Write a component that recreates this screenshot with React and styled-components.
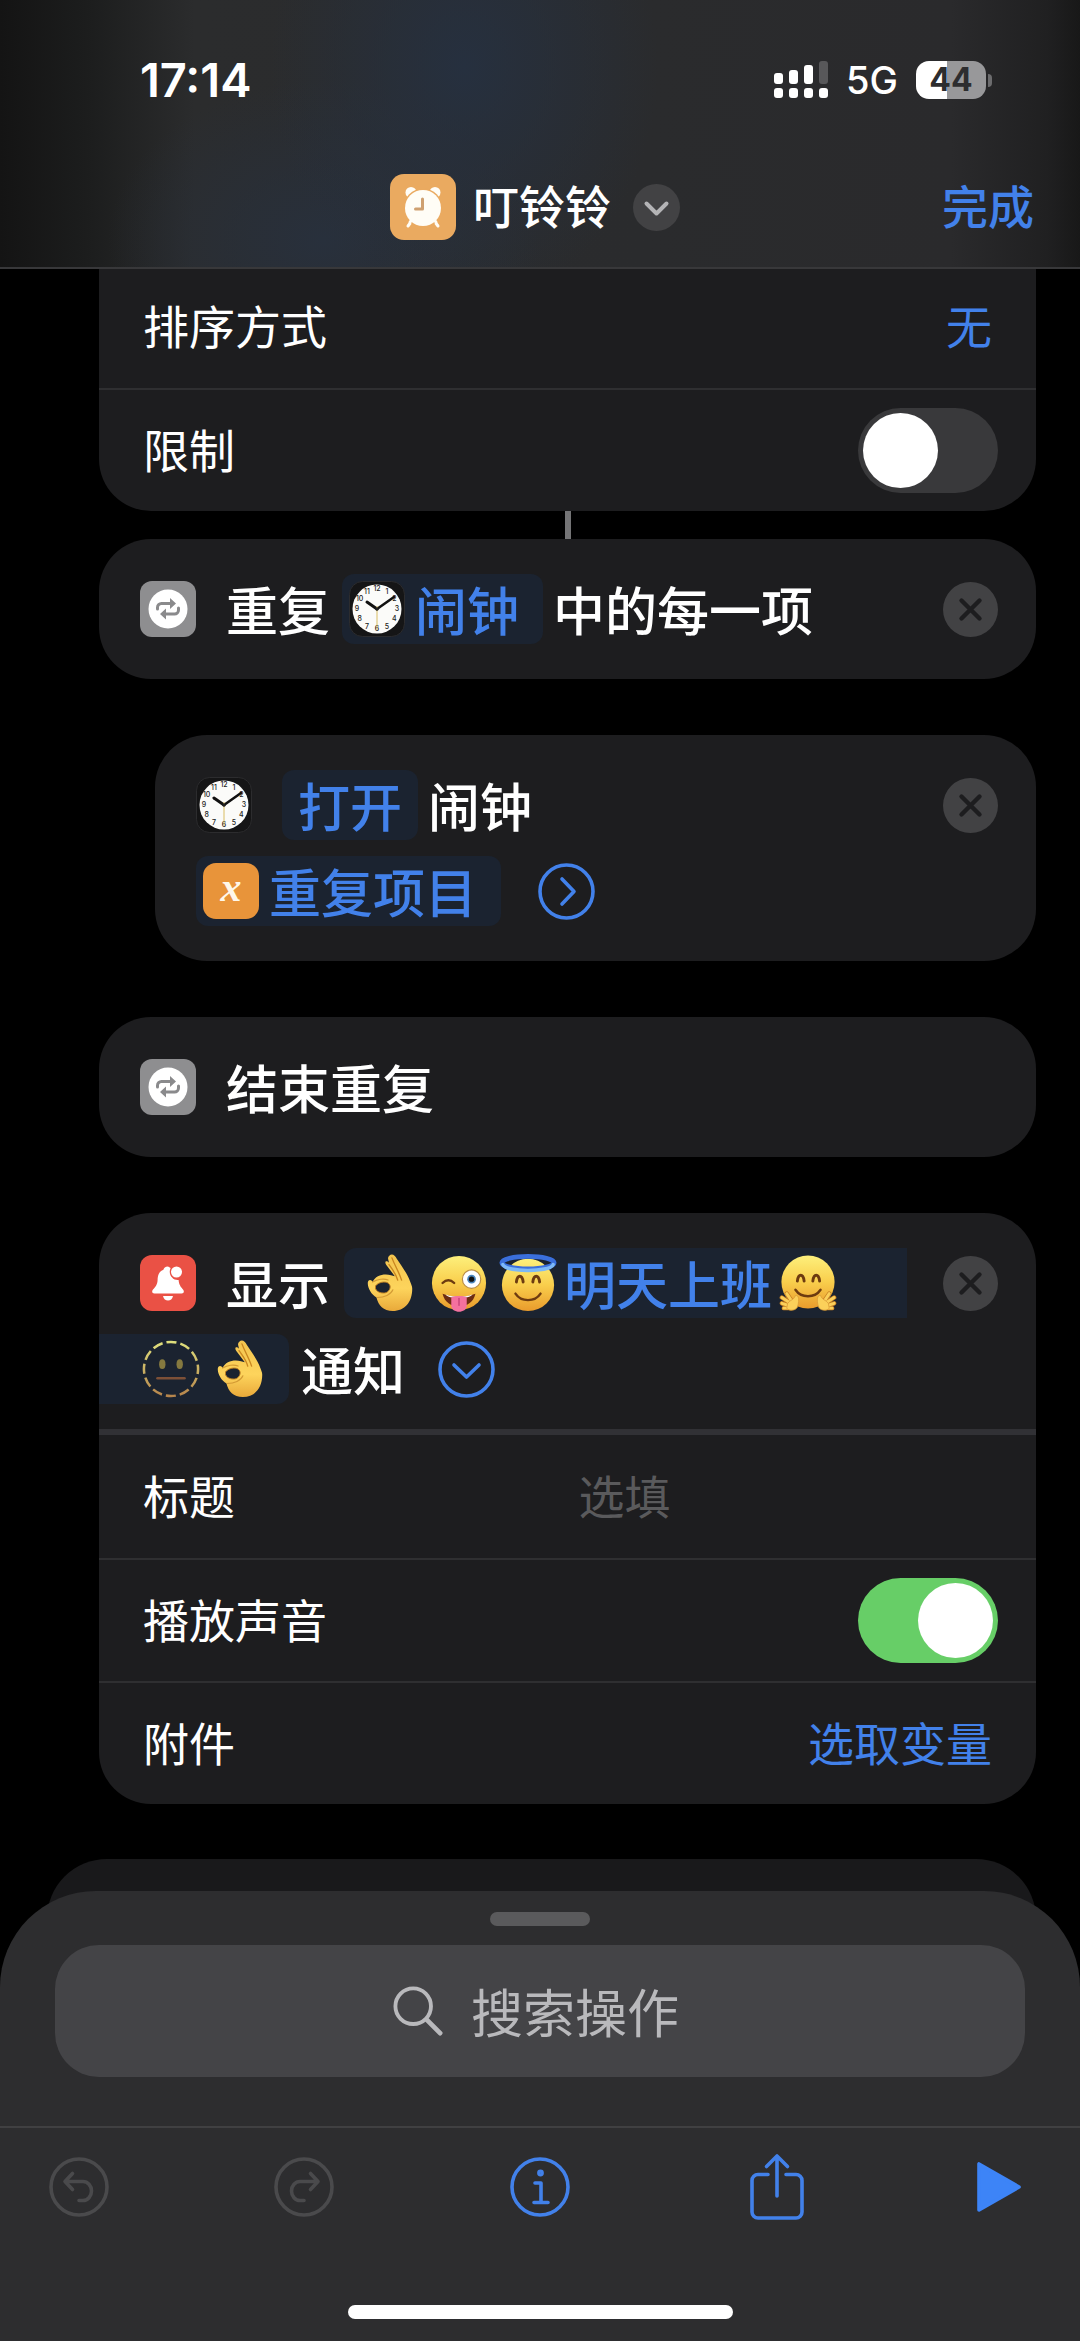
import React from 'react'
import styled, {createGlobalStyle} from 'styled-components'
import {useState} from 'react'

const Colors = {
    BLUE: '#4281ea',
    CARD: '#1d1d1f',
    LINE: '#2f2f31',
    TOKEN: '#1b2330',
    SHEET: '#2d2d2f',
    FIELD: '#444447',
    GREEN: '#67ce67',
    MUTED: '#4a4a4c',
}

const HOURS = [12, 1, 2, 3, 4, 5, 6, 7, 8, 9, 10, 11]

const ClockIcon = () => (
    <Icon viewBox="0 0 56 56" aria-hidden="true">
        <rect x="0.5" y="0.5" width="55" height="55" rx="13" fill="#151516" stroke="#2c2c2e" />
        <circle cx="28" cy="28" r="24.5" fill="#fbfbf9" />
        {HOURS.map((hour, i) => {
            const angle = (i * Math.PI) / 6
            return (
                <text
                    key={hour}
                    x={28 + Math.sin(angle) * 20}
                    y={30.4 - Math.cos(angle) * 20}
                    fontSize="7"
                    fontWeight="500"
                    textAnchor="middle"
                    fill="#222"
                >
                    {hour}
                </text>
            )
        })}
        <path d="M28 28 18 21" stroke="#111" strokeWidth="3" strokeLinecap="round" />
        <path d="M28 28 45 16" stroke="#111" strokeWidth="2.6" strokeLinecap="round" />
        <path d="M28 25v24" stroke="#d9bd62" strokeWidth="1" />
        <circle cx="28" cy="28" r="1.7" fill="#222" />
    </Icon>
)

const RepeatIcon = () => (
    <Icon viewBox="0 0 56 56" aria-hidden="true">
        <rect width="56" height="56" rx="12" fill="#8e8e90" />
        <circle cx="28" cy="28" r="19.5" fill="#fff" />
        <g fill="none" stroke="#8a8a8c" strokeWidth="3" strokeLinecap="round" strokeLinejoin="round">
            <path d="M17.500 28v-1.500a4 4 0 0 1 4-4H32" />
            <path d="M38.500 27v2a4 4 0 0 1-4 4H24" />
        </g>
        <path d="M30 17 36 22.500 30 28ZM26 27.500 20 33 26 38.500Z" fill="#8a8a8c" />
    </Icon>
)

const BellIcon = () => (
    <Icon viewBox="0 0 56 56" aria-hidden="true">
        <rect width="56" height="56" rx="12" fill="#ea5145" />
        <path
            d="M28 11.500c-3 0-4 1.600-4.600 3.200-4.400 1.600-5.600 5.600-5.800 10.200-.200 5-2.400 7-4.600 9.600-1.600 2-.8 4 1.400 4h27.200c2.200 0 3-2 1.400-4-2.200-2.600-4-4.600-4.400-9.500-5.600.8-11-5.500-8-12Z"
            fill="#fff"
        />
        <path d="M23 41h10c-.6 3-2.600 4.600-5 4.600S23.600 44 23 41Z" fill="#fff" />
        <circle cx="36.5" cy="17" r="5.5" fill="#fff" />
    </Icon>
)

const VariableIcon = () => (
    <Icon viewBox="0 0 56 56" aria-hidden="true">
        <rect width="56" height="56" rx="13" fill="#e8943a" />
        <text
            x="28"
            y="38"
            fontSize="42"
            fontWeight="700"
            fontStyle="italic"
            fontFamily="'Liberation Serif', serif"
            textAnchor="middle"
            fill="#fff8ea"
        >
            x
        </text>
    </Icon>
)

const AlarmIcon = () => (
    <AppIcon viewBox="0 0 66 66" aria-hidden="true">
        <rect width="66" height="66" rx="14" fill="#eaaa60" />
        <g fill="#fffdf6">
            <circle cx="21" cy="18.5" r="5.5" />
            <circle cx="45" cy="18.5" r="5.5" />
        </g>
        <path d="M21 48l-3 4M45 48l3 4" stroke="#fffdf6" strokeWidth="3" strokeLinecap="round" />
        <circle cx="33" cy="34" r="19.5" fill="#eaaa60" />
        <circle cx="33" cy="34" r="18" fill="#fffdf6" />
        <path d="M21.500 46l-2 3M44.500 46l2 3" stroke="#fffdf6" strokeWidth="3" />
        <path d="M32.500 25v10H25.500" fill="none" stroke="#cfa070" strokeWidth="3" strokeLinecap="round" strokeLinejoin="round" />
    </AppIcon>
)

const Gradients = () => (
    <Defs aria-hidden="true">
        <defs>
            <linearGradient id="face" x1="0" y1="0" x2="0" y2="1">
                <stop offset="0" stopColor="#fdf07c" />
                <stop offset="0.5" stopColor="#f9ce4c" />
                <stop offset="1" stopColor="#e99b2c" />
            </linearGradient>
            <linearGradient id="hand" x1="0" y1="0" x2="0" y2="1">
                <stop offset="0" stopColor="#f3c44e" />
                <stop offset="0.6" stopColor="#fdd45c" />
                <stop offset="1" stopColor="#e9a93a" />
            </linearGradient>
            <linearGradient id="dots" gradientUnits="userSpaceOnUse" x1="0" y1="0" x2="0" y2="60">
                <stop offset="0" stopColor="#e0e27e" />
                <stop offset="1" stopColor="#b5824a" />
            </linearGradient>
        </defs>
    </Defs>
)

const OkHand = () => (
    <Emoji viewBox="0 0 60 60" role="img" aria-label="👌">
        <path
            d="M29 2c3-3 6-1 8 3 5 8 11 15 14 24 1 3 2 4 2 7 0 14-8 23-20 23-10 0-15-6-17-14-5-3-9-9-9-15 0-4 4-4 5-1 3-7 12-9 19-7l4 1-9-12c-2-3 0-5 3-2l-1-4c0-1 0-2 1-3Z"
            fill="url(#hand)"
        />
        <path d="M32 4c3 8 7 14 10 23M29 11c4 6 7 9 9 16" fill="none" stroke="#c98620" strokeWidth="1.4" strokeLinecap="round" />
        <path d="M12 29c5-3 12-4 16-2M17 45c7 0 14-3 16-8" fill="none" stroke="#d39a34" strokeWidth="1.2" strokeLinecap="round" />
        <path d="M15 33c3-4 10-5 13-3 4 3 2 8-2 10-4 1-9 0-11-4Z" fill={Colors.TOKEN} stroke="#bd7c20" strokeWidth="1" />
    </Emoji>
)

const WinkTongue = () => (
    <Emoji viewBox="0 0 60 60" role="img" aria-label="😜">
        <circle cx="30" cy="30" r="28" fill="url(#face)" />
        <path d="M13 30c4-4 8-4 12 0" fill="none" stroke="#6d3b10" strokeWidth="2.5" strokeLinecap="round" />
        <circle cx="43" cy="26" r="9.5" fill="#fff" stroke="#b98c46" strokeWidth="1.2" />
        <circle cx="43" cy="26" r="4.5" fill="#4b86bd" />
        <circle cx="43" cy="26" r="2.8" fill="#111" />
        <path d="M13 41c11 4 23 4 34 0-2 9-9 13-17 13S15 50 13 41Z" fill="#6d2c12" />
        <path d="M16 42c9 3 19 3 28 0-3 5-25 5-28 0Z" fill="#fff" />
        <path d="M22 45c5-2 11-2 16 0v8c0 9-16 9-16 0Z" fill="#f4719f" />
        <path d="M30 46v7" stroke="#c9447a" strokeWidth="1.5" strokeLinecap="round" />
    </Emoji>
)

const Angel = () => (
    <Emoji viewBox="0 0 60 60" role="img" aria-label="😇">
        <circle cx="30" cy="32" r="27" fill="url(#face)" />
        <ellipse cx="30" cy="9" rx="27" ry="6.5" fill="none" stroke="#3a6fdc" strokeWidth="5" />
        <path d="M4 11c4 8 48 8 52 0" fill="none" stroke="#7db9f6" strokeWidth="3.5" strokeLinecap="round" />
        <g fill="none" stroke="#6d3b10" strokeLinecap="round">
            <path d="M18 29c1-8 6-8 7 0M35 29c1-8 6-8 7 0" strokeWidth="3" />
            <path d="M17 41c6 9 20 9 26 0" strokeWidth="2.5" />
        </g>
    </Emoji>
)

const Hug = () => (
    <Emoji viewBox="0 0 60 60" role="img" aria-label="🤗">
        <circle cx="30" cy="29" r="27.5" fill="url(#face)" />
        <g fill="none" stroke="#6d3b10" strokeLinecap="round">
            <path d="M19 28c1-8 6-8 7 0M35 28c1-8 6-8 7 0" strokeWidth="3" />
            <path d="M17 37c6 9 20 9 26 0" strokeWidth="2.5" />
        </g>
        <g stroke="#c67f22" strokeWidth="4.6" strokeLinecap="round">
            <path d="M12 51 3 45M12 54 3 51M12 56 5 56M14 50 8 41M48 51 57 45M48 54 57 51M48 56 55 56M46 50 52 41" />
        </g>
        <g stroke="#fbd05a" strokeWidth="3" strokeLinecap="round">
            <path d="M12 51 3 45M12 54 3 51M12 56 5 56M14 50 8 41M48 51 57 45M48 54 57 51M48 56 55 56M46 50 52 41" />
        </g>
        <path d="M9 51c3-4 6-3 8-8 4-1 4 6 2 12-2 4-9 4-11 1ZM51 51c-3-4-6-3-8-8-4-1-4 6-2 12 2 4 9 4 11 1Z" fill="#fbd05a" stroke="#d99a35" strokeWidth="0.8" />
    </Emoji>
)

const DottedFace = () => (
    <Emoji viewBox="0 0 60 60" role="img" aria-label="🫥">
        <circle cx="30" cy="30" r="28" fill="none" stroke="url(#dots)" strokeWidth="2.6" strokeDasharray="10.6 4.06" strokeDashoffset="5.3" />
        <ellipse cx="21" cy="25" rx="3.3" ry="5" fill="#85793f" />
        <ellipse cx="39" cy="25" rx="3.3" ry="5" fill="#85793f" />
        <path d="M16 39.500h28" stroke="#7d5037" strokeWidth="2.6" strokeLinecap="round" />
    </Emoji>
)

const CloseButton = () => (
    <RoundButton aria-label="删除">
        <svg viewBox="0 0 55 55" width="55" height="55">
            <circle cx="27.5" cy="27.5" r="27.5" fill="#424244" />
            <path d="M18.500 18.500l18 18M36.500 18.500l-18 18" stroke="#1d1d1f" strokeWidth="4.4" strokeLinecap="round" />
        </svg>
    </RoundButton>
)

const Disclosure = ({label, d}) => (
    <RoundButton aria-label={label}>
        <svg viewBox="0 0 57 57" width="57" height="57" fill="none" stroke={Colors.BLUE} strokeWidth="3.6">
            <circle cx="28.5" cy="28.5" r="26.5" />
            <path d={d} strokeLinecap="round" strokeLinejoin="round" />
        </svg>
    </RoundButton>
)

const StatusBar = () => (
    <Status>
        <Time>17:14</Time>
        <StatusRight>
            <svg width="54" height="38" viewBox="0 0 54 38" aria-hidden="true">
                <g fill="#fff">
                    <rect x="0" y="12" width="9" height="11" rx="3" />
                    <rect x="15" y="9" width="9" height="14" rx="3" />
                    <rect x="30" y="4" width="9" height="19" rx="3" />
                    <rect x="0" y="27" width="9" height="10" rx="3" />
                    <rect x="15" y="27" width="9" height="10" rx="3" />
                    <rect x="30" y="27" width="9" height="10" rx="3" />
                    <rect x="45" y="27" width="9" height="10" rx="3" />
                </g>
                <rect x="45" y="0" width="9" height="23" rx="3" fill="#58585a" />
            </svg>
            <Network>5G</Network>
            <Battery>
                <Level>44</Level>
                <Nub />
            </Battery>
        </StatusRight>
    </Status>
)

const App = () => {
    const [limit, setLimit] = useState(false)
    const [sound, setSound] = useState(true)
    const [title, setTitle] = useState('')
    const [query, setQuery] = useState('')

    return (
        <Page>
            <GlobalStyle />
            <Gradients />
            <Header>
                <StatusBar />
                <NavBar>
                    <TitleButton>
                        <AlarmIcon />
                        <Title>叮铃铃</Title>
                        <svg width="47" height="47" viewBox="0 0 47 47" aria-hidden="true">
                            <circle cx="23.5" cy="23.5" r="23.5" fill="#424244" />
                            <path d="M13.500 19.500l10 10 10-10" fill="none" stroke="#b4b4b6" strokeWidth="4" strokeLinecap="round" strokeLinejoin="round" />
                        </svg>
                    </TitleButton>
                    <LinkButton>完成</LinkButton>
                </NavBar>
            </Header>

            <Main>
                <Card $open>
                    <Row>
                        <span>排序方式</span>
                        <LinkButton>无</LinkButton>
                    </Row>
                    <Row>
                        <label htmlFor="limit">限制</label>
                        <Toggle id="limit" checked={limit} onChange={() => setLimit(!limit)} />
                    </Row>
                </Card>
                <Connector />

                <Card>
                    <Action>
                        <Line>
                            <RepeatIcon />
                            <Phrase>
                                重复
                                <Token>
                                    <ClockIcon />
                                    闹钟
                                </Token>
                                中的每一项
                            </Phrase>
                            <CloseButton />
                        </Line>
                    </Action>
                </Card>

                <Card $nested>
                    <Action>
                        <Line>
                            <ClockIcon />
                            <Phrase>
                                <Verb>打开</Verb>
                                闹钟
                            </Phrase>
                            <CloseButton />
                        </Line>
                        <Line>
                            <Token>
                                <VariableIcon />
                                重复项目
                            </Token>
                            <Disclosure label="展开" d="M24 16l12 12.500-12 12.500" />
                        </Line>
                    </Action>
                </Card>

                <Card>
                    <Action>
                        <Line>
                            <RepeatIcon />
                            <Phrase>结束重复</Phrase>
                        </Line>
                    </Action>
                </Card>

                <Card>
                    <Action $tight>
                        <Line>
                            <BellIcon />
                            <Phrase>
                                显示
                                <Message>
                                    <EmojiRun>
                                        <OkHand />
                                        <WinkTongue />
                                        <Angel />
                                    </EmojiRun>
                                    明天上班
                                    <Hug />
                                </Message>
                            </Phrase>
                            <CloseButton />
                        </Line>
                        <Line>
                            <MessageEnd>
                                <EmojiRun>
                                    <DottedFace />
                                    <OkHand />
                                </EmojiRun>
                            </MessageEnd>
                            <span>通知</span>
                            <Disclosure label="收起" d="M16 24l12.500 12 12.500-12" />
                        </Line>
                    </Action>
                    <Divider />
                    <Row>
                        <FieldLabel htmlFor="title">标题</FieldLabel>
                        <TextField id="title" placeholder="选填" value={title} onChange={(e) => setTitle(e.target.value)} />
                    </Row>
                    <Row>
                        <label htmlFor="sound">播放声音</label>
                        <Toggle id="sound" checked={sound} onChange={() => setSound(!sound)} />
                    </Row>
                    <Row>
                        <span>附件</span>
                        <LinkButton>选取变量</LinkButton>
                    </Row>
                </Card>
                <NextCard />
            </Main>

            <Dock>
                <Drawer>
                    <Grabber />
                    <Search>
                        <svg width="50" height="50" viewBox="0 0 52 52" fill="none" stroke="#b9b9bc" strokeLinecap="round" aria-hidden="true">
                            <circle cx="21" cy="21" r="18.5" strokeWidth="4" />
                            <path d="M35 35l14 14" strokeWidth="5" />
                        </svg>
                        <SearchField aria-label="搜索操作" placeholder="搜索操作" value={query} onChange={(e) => setQuery(e.target.value)} />
                    </Search>
                </Drawer>
                <Toolbar>
                    <ToolButton aria-label="撤销" $muted>
                        <svg width="60" height="60" viewBox="0 0 60 60">
                            <circle cx="30" cy="30" r="28" />
                            <path d="M23.500 16.500 16 24.500l7.500 8M16.500 24.500H34a8.500 9.500 0 0 1 0 19h-4" />
                        </svg>
                    </ToolButton>
                    <ToolButton aria-label="重做" $muted>
                        <svg width="60" height="60" viewBox="0 0 60 60">
                            <circle cx="30" cy="30" r="28" />
                            <path d="M36.500 16.500 44 24.500l-7.500 8M43.500 24.500H26a8.500 9.500 0 0 0 0 19h4" />
                        </svg>
                    </ToolButton>
                    <ToolButton aria-label="信息">
                        <svg width="60" height="60" viewBox="0 0 60 60">
                            <circle cx="30" cy="30" r="28" />
                            <path d="M25 26h6V45M24 45.500h14" />
                            <circle cx="30.5" cy="16" r="1.6" />
                        </svg>
                    </ToolButton>
                    <ToolButton aria-label="分享">
                        <svg width="54" height="68" viewBox="0 0 54 68">
                            <path d="M18 21.500H8a6 6 0 0 0-6 6V59a6 6 0 0 0 6 6h38a6 6 0 0 0 6-6V27.500a6 6 0 0 0-6-6H36" />
                            <path d="M27 43V3M16.500 13.500 27 3l10.500 10.500" />
                        </svg>
                    </ToolButton>
                    <ToolButton aria-label="运行">
                        <svg width="46" height="52" viewBox="0 0 46 52">
                            <path d="M3 3v46L43 26Z" fill="#3d84f7" stroke="#3d84f7" />
                        </svg>
                    </ToolButton>
                </Toolbar>
                <HomeIndicator />
            </Dock>
        </Page>
    )
}

export default App

const GlobalStyle = createGlobalStyle`
    * {
        box-sizing: border-box;
    }
    body {
        margin: 0;
        background: #000;
        color: #fff;
        font-family: Inter, 'Noto Sans CJK SC', sans-serif;
        font-size: 46px;
        line-height: 60px;
    }
    button, input {
        font: inherit;
        color: inherit;
        background: none;
        border: 0;
        padding: 0;
        margin: 0;
    }
    svg {
        display: block;
        flex: none;
    }
`
const Page = styled.div`
    display: flex;
    flex-direction: column;
    min-height: 100vh;
`
const Defs = styled.svg`
    position: absolute;
    width: 0;
    height: 0;
`
const Header = styled.header`
    position: sticky;
    top: 0;
    z-index: 2;
    height: 269px;
    display: flex;
    flex-direction: column;
    border-bottom: 2px solid #38383a;
    background:
        radial-gradient(ellipse 18% 90% at 43% 25%, #26303f 0%, #26303f00 100%),
        radial-gradient(ellipse 20% 60% at 30% 90%, #28303c 0%, #28303c00 100%),
        linear-gradient(90deg, #141414 0%, #1c1d1d 8%, #2b2c2d 18%, #2a2b2d 60%, #2a2a2c 88%, #202021 97%, #181818 100%);
`
const Status = styled.div`
    display: flex;
    align-items: center;
    justify-content: space-between;
    height: 160px;
    padding: 0 88px 0 140px;
`
const Time = styled.time`
    font-size: 47px;
    font-weight: 600;
`
const StatusRight = styled.div`
    display: flex;
    align-items: center;
    gap: 18px;
`
const Network = styled.span`
    font-size: 38px;
    font-weight: 500;
`
const Battery = styled.div`
    display: flex;
    align-items: center;
    gap: 2px;
`
const Level = styled.span`
    width: 70px;
    height: 38px;
    border-radius: 13px;
    background: linear-gradient(90deg, #fff 44%, #98989a 44%);
    color: #2d2d2f;
    font-size: 32px;
    font-weight: 700;
    line-height: 38px;
    text-align: center;
`
const Nub = styled.span`
    width: 4px;
    height: 13px;
    border-radius: 0 4px 4px 0;
    background: #6c6c6e;
`
const NavBar = styled.div`
    display: grid;
    grid-template-columns: 1fr auto 1fr;
    align-items: center;
    height: 94px;
    padding: 0 46px 0 36px;

    > :first-child {
        grid-column: 2;
    }
    > :last-child {
        justify-self: end;
    }
`
const TitleButton = styled.button`
    display: flex;
    align-items: center;
`
const Title = styled.span`
    margin: 0 22px 0 17px;
    font-weight: 500;
`
const AppIcon = styled.svg`
    width: 66px;
    height: 66px;
`
const LinkButton = styled.button`
    color: ${Colors.BLUE};

    ${NavBar} & {
        font-weight: 500;
    }
`
const Main = styled.main`
    display: flex;
    flex-direction: column;
    /* the list is scrolled a touch under the header */
    margin-top: -4px;
    padding: 0 44px 300px 99px;
`
const Card = styled.section`
    margin-left: ${(props) => (props.$nested ? '56px' : '0')};
    border-radius: ${(props) => (props.$open ? '0 0 52px 52px' : '52px')};
    background: ${Colors.CARD};
    overflow: hidden;

    & + & {
        margin-top: 56px;
    }
`
const Connector = styled.div`
    align-self: center;
    width: 6px;
    height: 28px;
    background: #747476;
`
const Row = styled.div`
    display: flex;
    align-items: center;
    justify-content: space-between;
    height: 123px;
    padding: 0 44px;

    & + & {
        border-top: 2px solid ${Colors.LINE};
    }
`
const Divider = styled.div`
    height: 6px;
    background: #313135;
`
const Toggle = styled.input.attrs({type: 'checkbox', role: 'switch'})`
    appearance: none;
    display: flex;
    width: 140px;
    height: 85px;
    margin-right: -6px;
    padding: 5px;
    border-radius: 43px;
    background: #39393b;

    &::before {
        content: '';
        width: 75px;
        height: 75px;
        border-radius: 50%;
        background: #fff;
    }
    &:checked {
        justify-content: flex-end;
        background: ${Colors.GREEN};
    }
`
const FieldLabel = styled.label`
    flex: 0 0 50%;
`
const TextField = styled.input`
    flex: 1;
    min-width: 0;
    margin-left: 11px;
    outline: 0;

    &::placeholder {
        color: #5a5a5c;
    }
`
const Action = styled.div`
    display: flex;
    flex-direction: column;
    gap: 16px;
    padding: 35px 38px ${(props) => (props.$tight ? '25px' : '35px')} 41px;
    font-family: 'Noto Sans CJK SC', Inter, sans-serif;
    font-size: 52px;
    font-weight: 500;
    line-height: 70px;
`
const Line = styled.div`
    display: flex;
    align-items: center;
    height: 70px;
`
const Icon = styled.svg`
    width: 56px;
    height: 56px;
    font-family: Inter, sans-serif;
`
const Phrase = styled.div`
    display: flex;
    flex: 1;
    align-items: center;
    margin-left: 30px;
`
const Token = styled.button`
    display: flex;
    align-items: center;
    gap: 10px;
    height: 70px;
    margin: 0 10px 0 12px;
    padding: 0 24px 0 7px;
    border-radius: 12px;
    background: ${Colors.TOKEN};
    color: ${Colors.BLUE};
    line-height: 70px;

    ${Line} > & {
        margin: 0 4px 0 0;
    }
`
const Verb = styled(Token)`
    margin: 0 10px 0 0;
    padding: 0 16px;
`
const Emoji = styled.svg`
    width: 58px;
    height: 58px;
`
const EmojiRun = styled.span`
    display: flex;
    gap: 11px;
`
const Message = styled(Token)`
    gap: 7px;
    margin: 0 0 0 14px;
    padding: 0 70px 0 17px;
    border-radius: 12px 0 0 12px;
`
const MessageEnd = styled(Message)`
    padding: 0 20px 0 43px;
    border-radius: 0 12px 12px 0;

    ${Line} > & {
        margin: 0 12px 0 -41px;
    }
`
const RoundButton = styled.button`
    margin-left: 33px;
`
const NextCard = styled.div`
    height: 140px;
    margin: 55px 0 0 -52px;
    border-radius: 60px;
    background: #19191b;
`
const Dock = styled.footer`
    position: fixed;
    right: 0;
    bottom: 0;
    left: 0;
    z-index: 2;
    display: flex;
    flex-direction: column;
    align-items: center;
    border-radius: 96px 96px 0 0;
    background: ${Colors.SHEET};
`
const Drawer = styled.div`
    display: flex;
    flex-direction: column;
    align-items: center;
    gap: 19px;
    width: 100%;
    padding: 21px 55px 49px;
`
const Grabber = styled.div`
    width: 100px;
    height: 14px;
    border-radius: 7px;
    background: #5a5a5c;
`
const Search = styled.label`
    display: flex;
    align-items: center;
    justify-content: center;
    gap: 28px;
    width: 100%;
    height: 132px;
    border-radius: 44px;
    background: ${Colors.FIELD};
    font-size: 52px;
    line-height: 70px;
`
const SearchField = styled.input`
    width: 216px;
    font-family: 'Noto Sans CJK SC', Inter, sans-serif;
    outline: 0;

    &::placeholder {
        color: #b9b9bc;
    }
`
const Toolbar = styled.nav`
    display: grid;
    grid-template-columns: 14% 1fr 1fr 1fr 13%;
    align-items: center;
    justify-items: center;
    width: 100%;
    height: 120px;
    padding: 0 58px 0 49px;
    border-top: 2px solid #404042;

    > :first-child {
        justify-self: start;
    }
    > :last-child {
        justify-self: end;
    }
`
const ToolButton = styled.button`
    color: ${(props) => (props.$muted ? Colors.MUTED : Colors.BLUE)};

    svg {
        fill: none;
        stroke: currentColor;
        stroke-width: 3.6;
        stroke-linecap: round;
        stroke-linejoin: round;
    }
`
const HomeIndicator = styled.div`
    width: 385px;
    height: 14px;
    margin: 59px 0 22px;
    border-radius: 7px;
    background: #fff;
`
